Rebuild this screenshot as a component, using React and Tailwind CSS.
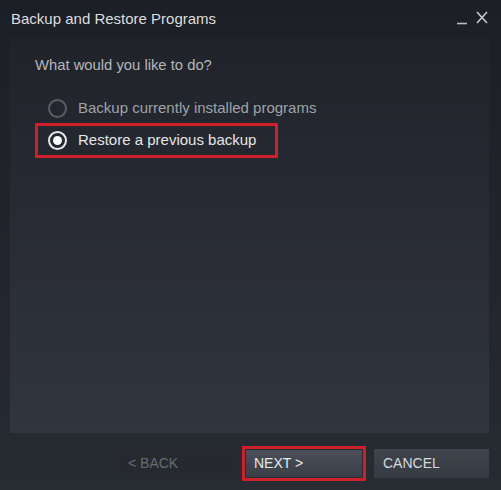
import React from "react";

export default function App() {
  return (
    <div
      className="w-[501px] h-[490px] flex flex-col bg-gradient-to-b from-[#1c1f25] to-[#272b32] overflow-hidden"
      style={{ fontFamily: '"Liberation Sans", Arial, sans-serif' }}
    >
      {/* title bar */}
      <div className="h-[38px] flex items-start justify-between pl-[11px] pr-[13px] pt-[9px]">
        <div className="text-[15px] text-[#dcdedf] leading-[20px]">Backup and Restore Programs</div>
        <div className="flex items-start gap-[8px] pt-[2px]">
          <svg width="11" height="14" viewBox="0 0 11 14">
            <path d="M0 12.5 H10" stroke="#b8bcc2" strokeWidth="1.6" />
          </svg>
          <svg width="12" height="13" viewBox="0 0 12 13">
            <path d="M1 1 L11 12 M11 1 L1 12" stroke="#c6cacf" strokeWidth="1.6" />
          </svg>
        </div>
      </div>

      {/* content panel */}
      <div className="ml-[10px] mr-[12px] h-[395px] bg-gradient-to-b from-[#20232a] to-[#31353e] flex flex-col pl-[25px]">
        <div className="pt-[17px] text-[14.8px] text-[#b4b7bb] leading-[20px]">What would you like to do?</div>
        <div className="mt-[23px] flex items-center h-[20px]">
          <div className="w-[19px] h-[19px] ml-[13px] rounded-full border-[2px] border-[#5a5e65]" />
          <div className="ml-[11px] text-[15px] text-[#9fa3a8]">Backup currently installed programs</div>
        </div>
        <div className="mt-[5px] w-[243px] h-[35px] border-[3px] border-[#cf1f2b] flex items-center">
          <div className="w-[19px] h-[19px] ml-[10px] rounded-full border-[2px] border-[#e8e9ea] flex items-center justify-center">
            <div className="w-[9px] h-[9px] rounded-full bg-white" />
          </div>
          <div className="ml-[11px] text-[15px] text-[#e4e6e8]">Restore a previous backup</div>
        </div>
      </div>

      {/* buttons */}
      <div className="flex items-center pl-[120px] mt-[13px]">
        <div className="w-[118px] h-[29px] bg-[#262a30] flex items-center pl-[8px] text-[14px] text-[#666a71]">&lt; BACK</div>
        <div className="ml-[4px] w-[124px] h-[35px] border-[3px] border-[#cf1f2b] p-[1px]">
          <div className="w-full h-full bg-gradient-to-b from-[#4a4f59] to-[#3a3e47] flex items-center pl-[8px] text-[14px] text-[#e6e8ea]">NEXT &gt;</div>
        </div>
        <div className="ml-[8px] w-[115px] h-[29px] bg-gradient-to-b from-[#3f444d] to-[#363a42] flex items-center pl-[9px] text-[14px] text-[#d6d8db]">CANCEL</div>
      </div>
    </div>
  );
}
